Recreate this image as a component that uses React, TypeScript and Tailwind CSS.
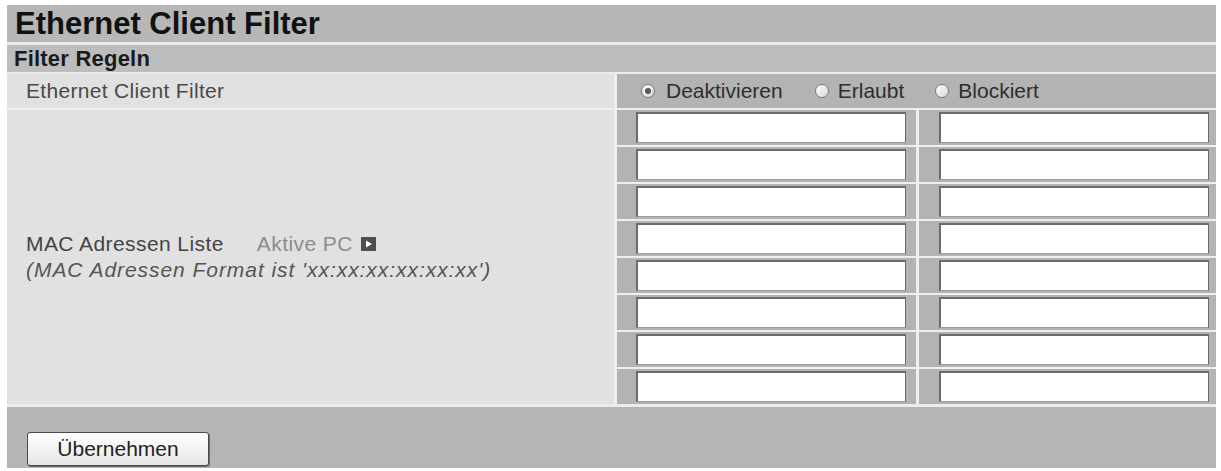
import React from "react";

const font = { fontFamily: '"Liberation Sans", Arial, sans-serif' };

function Radio({ checked }: { checked?: boolean }) {
  return (
    <span className="relative inline-flex h-[14px] w-[14px] shrink-0 items-center justify-center rounded-full border border-[#7a7a7a] bg-gradient-to-br from-[#ffffff] to-[#d6d6d6]">
      {checked && <span className="h-[6px] w-[6px] rounded-full bg-[#5a5a5a]" />}
    </span>
  );
}

function MacInput() {
  return (
    <div className="h-[31px] w-[270px] border-t-2 border-l-2 border-r border-b border-t-[#6c6c6c] border-l-[#6c6c6c] border-r-[#6a6a6a] border-b-[#9c9c9c] bg-white" />
  );
}

export default function App() {
  const rows = Array.from({ length: 8 });
  return (
    <div className="h-[471px] w-[1221px] bg-white pl-[7px] pt-[5px]" style={font}>
      <div className="w-[1209px] bg-[#ececec]">
        <div className="flex h-[37px] items-center bg-[#b7b7b7] pl-[8px] text-[31px] font-bold leading-none text-[#111]">
          Ethernet Client Filter
        </div>
        <div className="mt-[3px] flex h-[27px] items-center bg-[#bdbdbd] pl-[7px] text-[22px] font-bold leading-none tracking-[0.01em] text-[#1a1a1a]">
          Filter Regeln
        </div>
        <div className="mt-[2px] grid grid-cols-[607px_299px_297px] grid-rows-[34px_repeat(8,35px)] gap-x-[3px] gap-y-[2px] bg-[#efefef]">
          <div className="flex items-center bg-[#e1e1e1] pl-[19px] text-[21px] tracking-[0.015em] text-[#4a4a4a]">
            Ethernet Client Filter
          </div>
          <div className="col-span-2 flex items-center bg-[#b3b3b3] pl-[24px] text-[21px] text-[#2e2e2e]">
            <Radio checked />
            <span className="ml-[11px]">Deaktivieren</span>
            <span className="ml-[32px]"><Radio /></span>
            <span className="ml-[9px]">Erlaubt</span>
            <span className="ml-[31px]"><Radio /></span>
            <span className="ml-[9px]">Blockiert</span>
          </div>
          <div className="row-span-8 flex flex-col justify-center bg-[#e1e1e1] pl-[19px] text-[21px] leading-[26px]">
            <div className="flex items-center tracking-[0.02em] text-[#444]">
              <span>MAC Adressen Liste</span>
              <span className="ml-[33px] text-[#8c8c8c]">Aktive PC</span>
              <svg className="ml-[8px]" width="15" height="14" viewBox="0 0 15 14">
                <rect x="0" y="0" width="15" height="14" fill="#4e4e4e" />
                <polygon points="5,3.5 11,7 5,10.5" fill="#ffffff" />
              </svg>
            </div>
            <div className="italic tracking-[0.045em] text-[#555]">(MAC Adressen Format ist 'xx:xx:xx:xx:xx:xx')</div>
          </div>
          {rows.map((_, i) => (
            <React.Fragment key={i}>
              <div className="bg-[#b3b3b3] pl-[19px] pt-[2px]">
                <MacInput />
              </div>
              <div className="bg-[#b3b3b3] pl-[20px] pt-[2px]">
                <MacInput />
              </div>
            </React.Fragment>
          ))}
        </div>
        <div className="mt-[3px] h-[61px] bg-[#b5b5b5] pl-[20px] pt-[25px]">
          <button className="flex h-[34px] w-[182px] items-center justify-center rounded-[3px] border border-[#4a4a4a] bg-gradient-to-b from-[#ffffff] to-[#e6e6e6] text-[21px] text-[#222] shadow-[1px_1px_0_#6a6a6a]">
            Übernehmen
          </button>
        </div>
      </div>
    </div>
  );
}
